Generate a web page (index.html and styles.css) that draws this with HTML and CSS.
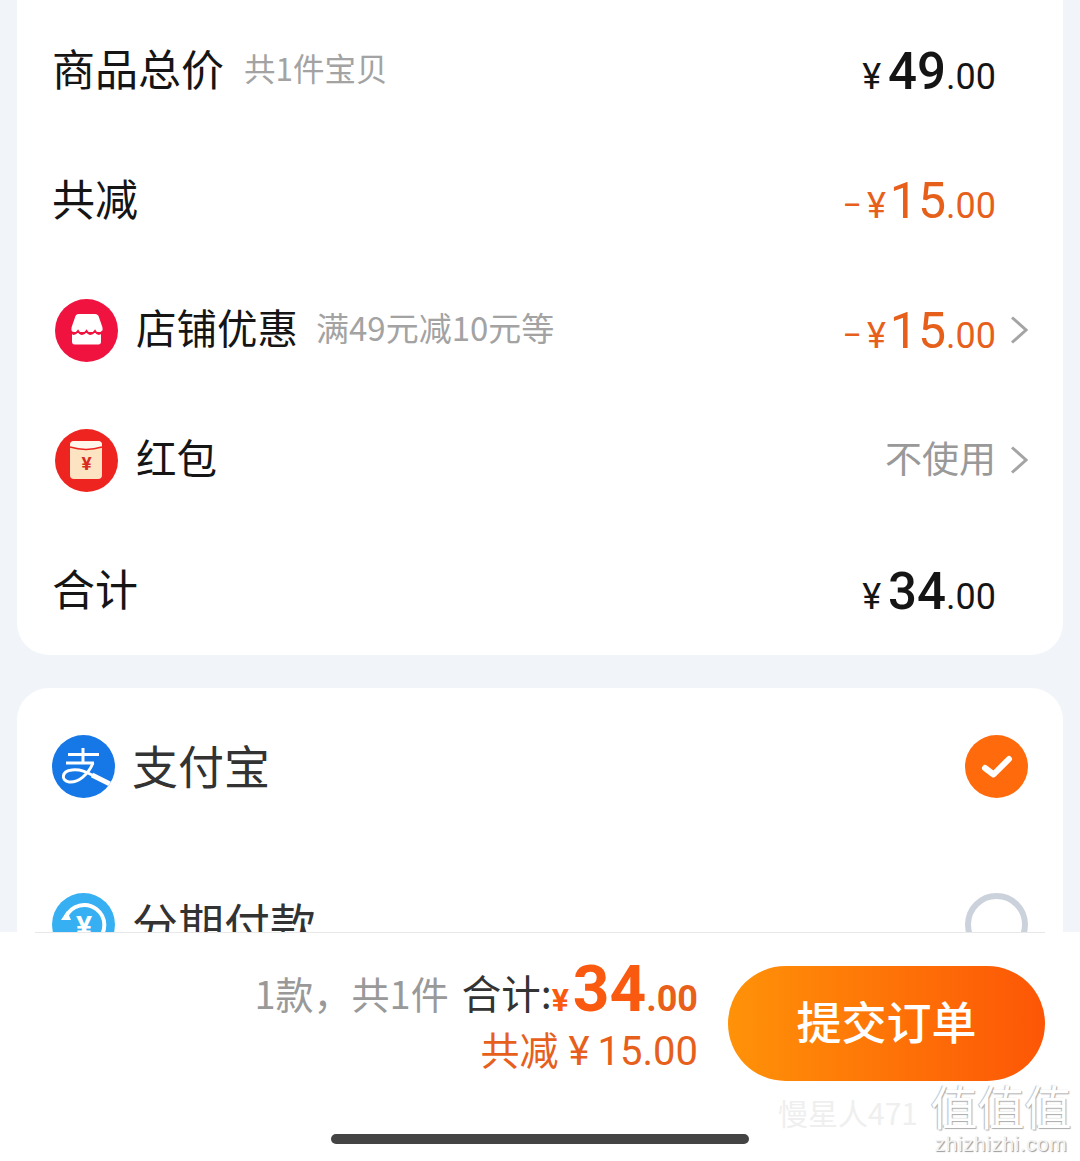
FILE: index.html
```html
<!DOCTYPE HTML>
<html>

<head>
  <meta charset="utf-8">
  <link rel="stylesheet" href="styles.css">
</head>

<body>
<div class="page">

  <div class="card summary">
    <div class="row">
      <span class="label plain">商品总价</span>
      <span class="note">共1件宝贝</span>
      <span class="price"><span class="yen">¥</span><span class="big">49</span><span class="cents">.00</span></span>
      <span class="arrow-slot"></span>
    </div>
    <div class="row">
      <span class="label plain">共减</span>
      <span class="price off"><span class="minus">–</span><span class="yen">¥</span><span class="big">15</span><span class="cents">.00</span></span>
      <span class="arrow-slot"></span>
    </div>
    <div class="row">
      <svg class="icon" viewBox="0 0 63 63">
        <circle cx="31.5" cy="31.5" r="31.5" fill="#f0123f"/>
        <path d="M23 15h17c2 0 3 1 3.500 2l3.500 10c1 3 1 6-2 6h-26c-3 0-3-3-2-6l3.500-10c.5-1 1.500-2 2.500-2z" fill="#fff"/>
        <path d="M17 34h29v9c0 1.500-1 2.500-2.500 2.500h-24c-1.500 0-2.500-1-2.500-2.500z" fill="#fff"/>
        <path d="M15 32c2.500 4 5 4 8 0 2.500 4 5.500 4 8.500 0 2.500 4 5.500 4 8.500 0 2.500 4 5 4 8 0" fill="none" stroke="#f0123f" stroke-width="2"/>
      </svg>
      <span class="label small">店铺优惠</span>
      <span class="note store">满49元减10元等</span>
      <span class="price off"><span class="minus">–</span><span class="yen">¥</span><span class="big">15</span><span class="cents">.00</span></span>
      <span class="arrow-slot"><svg class="arrow" viewBox="0 0 18 28"><path d="M2 1.500L16 14 2 26.500" /></svg></span>
    </div>
    <div class="row">
      <svg class="icon" viewBox="0 0 63 63">
        <circle cx="31.500" cy="31.500" r="31.500" fill="#ee2420"/>
        <rect x="15" y="12" width="32" height="38" rx="4" fill="#fce3c2"/>
        <path d="M15 16c0-3 2-4 4-4h24c2 0 4 1 4 4v2c-10 3-22 3-32 0z" fill="#fff6ec"/>
        <path d="M15 18c10 3 22 3 32 0" fill="none" stroke="#ee2420" stroke-width="1.500"/>
        <text x="31.500" y="41" class="envelope-yen">¥</text>
      </svg>
      <span class="label small">红包</span>
      <span class="unused">不使用</span>
      <span class="arrow-slot"><svg class="arrow" viewBox="0 0 18 28"><path d="M2 1.500L16 14 2 26.500" /></svg></span>
    </div>
    <div class="row">
      <span class="label plain">合计</span>
      <span class="price"><span class="yen">¥</span><span class="big">34</span><span class="cents">.00</span></span>
      <span class="arrow-slot"></span>
    </div>
  </div>

  <div class="card pay">
    <div class="pay-row">
      <svg class="icon" viewBox="0 0 63 63">
        <defs><clipPath id="ali-clip"><circle cx="31.500" cy="31.500" r="31.500"/></clipPath></defs>
        <circle cx="31.500" cy="31.500" r="31.500" fill="#1677e6"/>
        <g clip-path="url(#ali-clip)" fill="none" stroke="#fff">
          <path d="M31 13v15M16 19.500h31M14 28h28" stroke-width="3"/>
          <path d="M41 28C36 40 26 48 17 47 9 46 9 36 20 35 30 34 36 38 44 42" stroke-width="3"/>
          <path d="M40 40L64 52" stroke-width="5"/>
        </g>
      </svg>
      <span class="pay-name">支付宝</span>
      <svg class="check" viewBox="0 0 63 63">
        <circle cx="31.500" cy="31.500" r="31.500" fill="#ff6a0d"/>
        <path d="M20 33l8.500 6.500L44 24" fill="none" stroke="#fff" stroke-width="6" stroke-linecap="round" stroke-linejoin="round"/>
      </svg>
    </div>
    <div class="pay-row">
      <svg class="icon" viewBox="0 0 63 63">
        <circle cx="31.500" cy="31.500" r="31.500" fill="#36b0f2"/>
        <path d="M14 24A20 20 0 1 1 14 40" fill="none" stroke="#fff" stroke-width="4"/>
        <path d="M9 27l6-9 4 9z" fill="#fff"/>
        <text x="32" y="44" class="plan-yen">¥</text>
      </svg>
      <span class="pay-name">分期付款</span>
      <span class="radio"></span>
    </div>
  </div>

  <div class="bar">
    <div class="bar-inner">
      <div class="totals">
        <div class="total-line">
          <span class="count">1款，共1件</span>
          <span class="sum-label">合计:</span><span class="sum"><span class="sum-yen">¥</span><span class="sum-big">34</span><span class="sum-cents">.00</span></span>
        </div>
        <div class="saved">共减<span class="saved-sum"><span class="saved-yen">¥</span>15.00</span></div>
      </div>
      <div class="submit">提交订单</div>
    </div>
    <div class="home"></div>
  </div>

  <div class="mark-user">慢星人471</div>
  <div class="mark-site">
    <div class="mark-big">值值值</div>
    <div class="mark-url">zhizhizhi.com</div>
  </div>

</div>
</body>

</html>
```

FILE: styles.css
```css
* {
  box-sizing: border-box;
}

html, body {
  margin: 0;
  padding: 0;
}

body {
  font-family: "Noto Sans CJK SC", "Noto Sans", sans-serif;
  color: #151515;
}

.page {
  position: relative;
  width: 1080px;
  height: 1161px;
  overflow: hidden;
  background-color: #f1f4f8;
  padding: 0 17px;
}

.card {
  background-color: #fff;
  border-radius: 32px;
}

.summary {
  margin-top: -40px;
  padding: 45px 35px 0 38px;
}

.pay {
  margin-top: 33px;
  padding: 0 35px;
}

/* строки с суммами */
.row {
  display: flex;
  align-items: center;
  height: 130px;
}

.label {
  font-size: 43px;
  line-height: 60px;
  padding-bottom: 6px;
}

.label.plain {
  margin-left: -3px;
}

.label.small {
  font-size: 40.5px;
  margin-left: 18px;
}

.note {
  font-size: 31.5px;
  color: #a3a3a3;
  margin-left: 20px;
  padding-bottom: 6px;
}

.note.store {
  font-size: 33px;
  margin-left: 18px;
}

.icon {
  display: block;
  flex: none;
  width: 63px;
  height: 63px;
}

.price {
  margin-left: auto;
  font-family: Roboto, "Liberation Sans", sans-serif;
  white-space: nowrap;
  padding-top: 2px;
}

.price .big {
  font-size: 51px;
  font-weight: 500;
}

.price.off .big {
  font-size: 50px;
  font-weight: 400;
}

.price .cents {
  font-size: 36px;
}

.yen {
  font-size: 36px;
  margin-right: 7px;
}

.off .yen {
  margin-right: 4px;
}

.minus {
  font-size: 28px;
  font-weight: 500;
  margin-right: 6px;
  vertical-align: 3px;
}

.off {
  color: #e6601c;
}

.unused {
  margin-left: auto;
  font-size: 37px;
  color: #999;
  padding-bottom: 6px;
}

.arrow-slot {
  flex: none;
  width: 32px;
  display: flex;
  justify-content: flex-end;
}

.arrow {
  width: 18px;
  height: 28px;
  fill: none;
  stroke: #a4a4a4;
  stroke-width: 3;
}

.envelope-yen {
  font: bold 19px Roboto, sans-serif;
  fill: #d92a20;
  text-anchor: middle;
}

.plan-yen {
  font: bold 30px Roboto, sans-serif;
  fill: #fff;
  text-anchor: middle;
}

/* способы оплаты */
.pay-row {
  display: flex;
  align-items: center;
  height: 157px;
}

.pay-row + .pay-row {
  margin-top: 1px;
}

.pay-name {
  font-size: 46px;
  color: #333;
  margin-left: 17px;
  padding-bottom: 6px;
}

.check {
  display: block;
  width: 63px;
  height: 63px;
  margin-left: auto;
}

.radio {
  width: 63px;
  height: 63px;
  border: 6px solid #cbd2dc;
  border-radius: 50%;
  margin-left: auto;
}

/* нижняя панель */
.bar {
  position: absolute;
  left: 0;
  right: 0;
  bottom: 0;
  height: 229px;
  background-color: #fff;
  padding: 0 35px;
}

.bar-inner {
  display: flex;
  align-items: flex-start;
  justify-content: flex-end;
  gap: 30px;
  height: 202px;
  border-top: 1px solid #e8e8e8;
  padding-top: 33px;
}

.totals {
  text-align: right;
  white-space: nowrap;
  margin-top: -14px;
}

.total-line {
  display: flex;
  align-items: baseline;
  justify-content: flex-end;
  height: 71px;
}

.count {
  font-size: 38px;
  color: #999;
  margin-right: 13px;
  transform: translateY(-2px);
}

.sum-label {
  font-size: 39.5px;
  color: #333;
  transform: translateY(-2px);
}

.sum {
  color: #fa5a0f;
  font-family: Roboto, "Liberation Sans", sans-serif;
  font-weight: 700;
}

.sum-yen {
  font-size: 32px;
  margin-right: 4px;
}

.sum-big {
  font-size: 64px;
}

.sum-cents {
  font-size: 36px;
  color: #e8601a;
}

.saved {
  font-size: 39px;
  line-height: 50px;
  color: #e6601c;
}

.saved-sum {
  font-family: Roboto, sans-serif;
  font-size: 40px;
  margin-left: 10px;
}

.saved-yen {
  margin-right: 8px;
}

.submit {
  flex: none;
  width: 317px;
  height: 115px;
  border-radius: 58px;
  background: linear-gradient(90deg, #ff9208, #fd5606);
  color: #fff;
  font-size: 45px;
  font-weight: 500;
  line-height: 109px;
  text-align: center;
}

.home {
  width: 418px;
  height: 10px;
  border-radius: 5px;
  background-color: #444;
  margin: 0 auto;
}

/* водяные знаки */
.mark-user {
  position: absolute;
  left: 778px;
  top: 1092px;
  font-size: 30px;
  line-height: 40px;
  color: #efefef;
}

.mark-site {
  position: absolute;
  left: 930px;
  top: 1078px;
  width: 142px;
  text-align: center;
}

.mark-big {
  font-size: 47px;
  line-height: 54px;
  color: #fff;
  text-shadow: 1px 1px 1px #aaa, -1px 0 1px #bbb;
  white-space: nowrap;
}

.mark-url {
  font-family: "Liberation Sans", sans-serif;
  font-size: 21px;
  line-height: 24px;
  letter-spacing: .5px;
  color: #f4f4f4;
  text-shadow: 1px 1px 1px #999;
}
```
